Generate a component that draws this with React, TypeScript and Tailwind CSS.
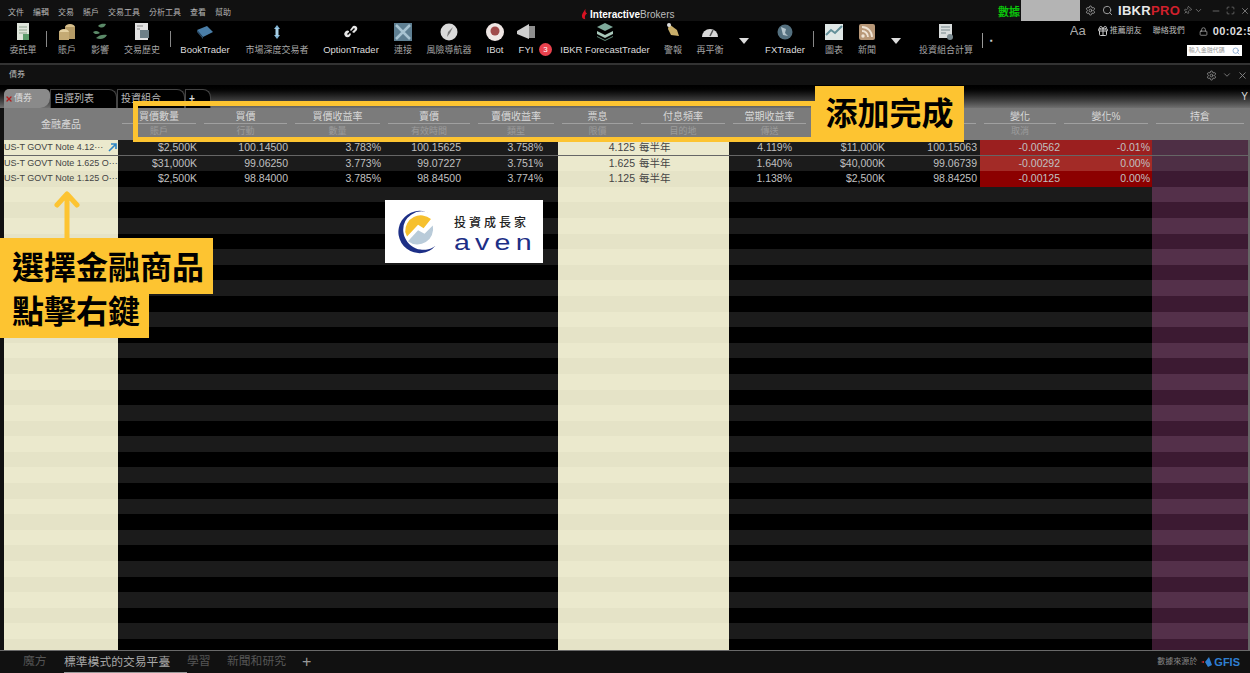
import React from 'react';
import { Gift, Lock, Pin, Search, Settings, X, Minus, Maximize, ChevronDown } from 'lucide-react';

const menus = ['文件', '編輯', '交易', '賬戶', '交易工具', '分析工具', '查看', '幫助'];

const Icon = ({ children }: { children: React.ReactNode }) => (
  <svg viewBox="0 0 20 20" className="w-[20px] h-[20px]">{children}</svg>
);

const icons: Record<string, React.ReactNode> = {
  order: <Icon><rect x="4" y="1" width="12" height="17" fill="#dfe5dc" /><path d="M6 5h8M6 8h8M6 11h8" stroke="#8fa58f" /><rect x="10" y="12" width="6" height="6" fill="#5d9b6c" /></Icon>,
  account: <Icon><ellipse cx="13" cy="5" rx="5" ry="3" fill="#d8c08c" /><rect x="8" y="5" width="10" height="12" fill="#b59b66" /><ellipse cx="7" cy="10" rx="5" ry="3" fill="#e4d0a0" /><rect x="2" y="10" width="10" height="8" fill="#c4aa74" /></Icon>,
  impact: <Icon><path d="M8 4c3-3 6-2 8-2-1 3-4 5-8 2zM3 10c3-2 5-1 7 1-3 2-6 1-7-1zM6 16c3-3 7-4 11-3-2 4-7 5-11 3z" fill="#5b8a68" /></Icon>,
  history: <Icon><rect x="3" y="1" width="13" height="17" fill="#e2e2e2" /><rect x="8" y="8" width="9" height="8" fill="#6d7f87" /><path d="M5 4h6M5 7h3" stroke="#888" /></Icon>,
  book: <Icon><path d="M2 8l10-4 6 6-10 5z" fill="#4a7ea8" /><path d="M2 8l6 7v2L2 10z" fill="#2c4e6b" /></Icon>,
  depth: <Icon><path d="M10 3l3 4H7zM10 17l-3-4h6z" fill="#7fb4d6" /><rect x="8.5" y="6" width="3" height="8" fill="#a8cfe6" /></Icon>,
  option: <Icon><path d="M12 4a3 3 0 0 1 4 4l-3 3-2-1 3-3-1-1-3 3-1-1zM8 9a3 3 0 0 0-4 1 3 3 0 0 0 0 4 3 3 0 0 0 5 0l1-2-1-1-2 2-1-1 2-2z" fill="#e6e6e6" /></Icon>,
  connect: <Icon><rect x="1" y="1" width="18" height="18" fill="#5e7f92" /><path d="M3 3l14 14M17 3L3 17" stroke="#a8c4d2" strokeWidth="2.5" /></Icon>,
  risk: <Icon><circle cx="10" cy="10" r="8.5" fill="#d9d9d9" /><path d="M14 5l-3 6-3 4 1-5z" fill="#777" /></Icon>,
  ibot: <Icon><circle cx="10" cy="10" r="9" fill="#efe6e4" /><circle cx="10" cy="9" r="4.5" fill="#a04a4a" /></Icon>,
  fyi: <Icon><path d="M1 9l12-7v15L1 12z" fill="#cfcfcf" /><rect x="13" y="4" width="6" height="12" fill="#8f8f8f" /></Icon>,
  forecast: <Icon><path d="M10 1l8 4-8 4-8-4z" fill="#7ea99a" /><path d="M2 9l8 4 8-4v3l-8 4-8-4z" fill="#a9c9bb" /><path d="M2 14l8 4 8-4v1l-8 4-8-4z" fill="#5f8a7a" /></Icon>,
  alert: <Icon><path d="M6 2l8 6 2 6-8-1-3-6z" fill="#c9ae6a" /><circle cx="6" cy="3" r="2" fill="#ddd" /></Icon>,
  rebalance: <Icon><path d="M2 15a8 8 0 0 1 16 0z" fill="#d8d8d8" /><path d="M10 14l3-6" stroke="#555" strokeWidth="1.5" /></Icon>,
  fx: <Icon><circle cx="10" cy="10" r="7.5" fill="#54707f" /><path d="M6 5l5 2-1 4 3 3-5-1z" fill="#b4c4cc" /></Icon>,
  chart: <Icon><rect x="1" y="2" width="18" height="16" fill="#dfe7e6" /><path d="M2 13l5-5 4 3 7-7" stroke="#63909a" strokeWidth="2" fill="none" /></Icon>,
  news: <Icon><rect x="2" y="2" width="16" height="16" rx="2" fill="#b89878" /><circle cx="6" cy="14" r="1.7" fill="#efe4d6" /><path d="M5 9a6 6 0 0 1 6 6M5 5a10 10 0 0 1 10 10" stroke="#efe4d6" strokeWidth="1.8" fill="none" /></Icon>,
  calc: <Icon><rect x="3" y="2" width="13" height="14" fill="#d8dcdc" /><path d="M5 5h9M5 8h9M5 11h5" stroke="#76878c" /><circle cx="14" cy="15" r="3" fill="#7a8a90" /></Icon>,
};

const tools = [
  { w: 'w-[46px]', icon: 'order', label: '委託單' },
  { sep: true },
  { w: 'w-[38px]', icon: 'account', label: '賬戶' },
  { w: 'w-[28px]', icon: 'impact', label: '影響' },
  { w: 'w-[56px]', icon: 'history', label: '交易歷史' },
  { sep: true },
  { w: 'w-[66px]', icon: 'book', label: 'BookTrader', bright: true },
  { w: 'w-[78px]', icon: 'depth', label: '市場深度交易者' },
  { w: 'w-[70px]', icon: 'option', label: 'OptionTrader', bright: true },
  { w: 'w-[34px]', icon: 'connect', label: '連接' },
  { w: 'w-[58px]', icon: 'risk', label: '風險導航器' },
  { w: 'w-[34px]', icon: 'ibot', label: 'IBot', bright: true },
  { w: 'w-[28px]', icon: 'fyi', label: 'FYI', bright: true },
  { badge: true },
  { w: 'w-[104px]', icon: 'forecast', label: 'IBKR ForecastTrader', bright: true },
  { w: 'w-[32px]', icon: 'alert', label: '警報' },
  { w: 'w-[42px]', icon: 'rebalance', label: '再平衡' },
  { caret: 'w-[26px]' },
  { w: 'w-[56px]', icon: 'fx', label: 'FXTrader', bright: true },
  { sep: true },
  { w: 'w-[38px]', icon: 'chart', label: '圖表' },
  { w: 'w-[28px]', icon: 'news', label: '新聞' },
  { caret: 'w-[30px]' },
  { w: 'w-[70px]', icon: 'calc', label: '投資組合計算' },
];

const gridCols =
  'grid grid-cols-[114px_82px_91px_93px_90px_84px_79px_92px_81px_80px_90px_80px_92px_96px]';

const headers = [
  ['買價數量', '賬戶'],
  ['買價', '行動'],
  ['買價收益率', '數量'],
  ['賣價', '有效時間'],
  ['賣價收益率', '類型'],
  ['票息', '限價'],
  ['付息頻率', '目的地'],
  ['當期收益率', '傳送'],
  ['', ''],
  ['', ''],
  ['變化', '取消'],
  ['變化%', ''],
  ['持倉', ''],
];

const cellPad = [
  'pr-[3px] text-right',
  'pr-[3px] text-right',
  'pr-[3px] text-right',
  'pr-[13px] text-right',
  'pr-[15px] text-right',
  'pr-[2px] text-right',
  'pl-[2px] text-left',
  'pr-[18px] text-right',
  'pr-[5px] text-right',
  'pr-[3px] text-right',
  'pr-0 text-right',
  'pr-[2px] text-right',
  '',
];

const data = [
  ['US-T GOVT Note 4.12···', '$2,500K', '100.14500', '3.783%', '100.15625', '3.758%', '4.125', '每半年', '4.119%', '$11,000K', '100.15063', '-0.00562', '-0.01%', ''],
  ['US-T GOVT Note 1.625 O···', '$31,000K', '99.06250', '3.773%', '99.07227', '3.751%', '1.625', '每半年', '1.640%', '$40,000K', '99.06739', '-0.00292', '0.00%', ''],
  ['US-T GOVT Note 1.125 O···', '$2,500K', '98.84000', '3.785%', '98.84500', '3.774%', '1.125', '每半年', '1.138%', '$2,500K', '98.84250', '-0.00125', '0.00%', ''],
];

const redBg = ['bg-[#9b1f1f]', 'bg-[#a32b27]', 'bg-[#8c0000]'];

function cellBg(col: number, row: number) {
  const light = row === 0 || row % 2 === 1;
  if (col === 0 || col === 6 || col === 7) return light ? 'bg-[#ebe9cd]' : 'bg-[#e5e3c7]';
  if (col === 13) {
    if (row < 2) return 'bg-[#4e2f45]';
    return light ? 'bg-[#54304a]' : 'bg-[#3c1a32]';
  }
  if ((col === 11 || col === 12) && row < 3) return redBg[row];
  return light ? 'bg-[#1b1b1b]' : 'bg-black';
}

const rows = Array.from({ length: 33 }, (_, i) => i);

export default function App() {
  return (
    <div className="relative w-[1250px] h-[673px] overflow-hidden flex flex-col bg-[#111] font-['Liberation_Sans','Noto_Sans_CJK_TC',sans-serif]">
      {/* title bar */}
      <div className="h-[21px] shrink-0 flex items-center bg-[#111]">
        <div className="flex items-center gap-[9px] pl-[8px] w-[570px] shrink-0 pt-[4px] text-[8px] text-[#b5b5b5]">
          {menus.map((m) => (
            <span key={m}>{m}</span>
          ))}
        </div>
        <div className="flex items-center w-[428px] shrink-0 pl-[11px] pt-[7px]">
          <svg viewBox="0 0 8 12" className="w-[7px] h-[12px] mr-[2px]">
            <path d="M5 0C4 3 1 5 1 8c0 3 2 4 4 4-1-2-1-5 2-7-2 0-2-2-2-5z" fill="#d81222" />
          </svg>
          <span className="text-[10px] font-bold text-white">Interactive</span>
          <span className="text-[10px] text-[#bdbdbd]">Brokers</span>
        </div>
        <span className="text-[11px] font-bold text-[#0bc40b] w-[23px] shrink-0 pt-[3px]">數據</span>
        <div className="w-[59px] h-[21px] shrink-0 bg-[#b4b4b4]" />
        <Settings className="w-[11px] h-[11px] shrink-0 ml-[5px] text-[#999]" />
        <Search className="w-[11px] h-[11px] shrink-0 ml-[6px] text-[#aaa]" />
        <span className="ml-[5px] shrink-0 text-[13px] font-bold text-[#e8e8e8] tracking-[0.3px]">IBKR</span>
        <span className="shrink-0 text-[13px] font-bold text-[#d0202c] tracking-[0.3px]">PRO</span>
        <Pin className="w-[9px] h-[9px] shrink-0 ml-[3px] text-[#888] rotate-45" />
        <ChevronDown className="w-[9px] h-[9px] shrink-0 ml-[2px] text-[#888]" />
        <Minus className="w-[10px] h-[10px] shrink-0 ml-[8px] text-[#777]" />
        <Maximize className="w-[9px] h-[9px] shrink-0 ml-[5px] text-[#777]" />
        <X className="w-[10px] h-[10px] shrink-0 ml-[5px] text-[#888]" />
      </div>

      {/* toolbar */}
      <div className="h-[42px] shrink-0 flex bg-black">
        {tools.map((t, i) => {
          if (t.sep)
            return (
              <div key={i} className="w-[2px] flex items-start pt-[10px]">
                <div className="w-px h-[16px] bg-[#888]" />
              </div>
            );
          if (t.badge)
            return (
              <div key={i} className="w-[14px] -ml-px flex items-end pb-[7px]">
                <span className="w-[13px] h-[13px] rounded-full bg-[#e9414d] text-white text-[8px] leading-[13px] text-center">3</span>
              </div>
            );
          if (t.caret)
            return (
              <div key={i} className={`${t.caret} flex justify-center pt-[17px]`}>
                <div className="w-0 h-0 border-x-[5px] border-x-transparent border-t-[6px] border-t-[#ddd]" />
              </div>
            );
          return (
            <div key={i} className={`${t.w} flex flex-col items-center pt-[1px]`}>
              <div className="h-[20px]">{icons[t.icon as string]}</div>
              <span className={`mt-[2px] whitespace-nowrap leading-[12px] ${t.bright ? 'text-[9.5px] text-[#ddd]' : 'text-[9px] text-[#a5a5a5]'}`}>
                {t.label}
              </span>
            </div>
          );
        })}
        <div className="ml-[1px] pt-[12px]">
          <div className="w-px h-[15px] bg-[#999]" />
        </div>
        <div className="ml-[7px] pt-[16px] text-[8px] leading-[8px] text-[#ccc]">▪</div>
        <div className="ml-[77px] flex-1 min-w-0 overflow-hidden flex flex-col">
          <div className="flex items-center h-[20px] whitespace-nowrap">
            <span className="text-[13px] text-[#aaa]">Aa</span>
            <Gift className="w-[12px] h-[12px] shrink-0 ml-[11px] text-[#ccc]" />
            <span className="ml-[1px] text-[8px] text-[#bbb]">推薦朋友</span>
            <span className="ml-[11px] text-[8px] text-[#bbb]">聯絡我們</span>
            <Lock className="w-[9px] h-[9px] shrink-0 ml-[14px] text-[#aaa]" />
            <span className="ml-[5px] text-[11px] font-bold text-[#ddd] tracking-[0.4px]">00:02:56</span>
          </div>
          <div className="ml-[117px] mt-[4px] w-[55px] h-[11px] bg-white flex items-center justify-between px-[2px]">
            <span className="text-[6px] text-[#999] whitespace-nowrap">輸入金融代碼</span>
            <Search className="w-[8px] h-[8px] shrink-0 text-[#6a93c4]" />
          </div>
        </div>
      </div>
      <div className="h-[2px] shrink-0 bg-[#333]" />

      {/* panel title */}
      <div className="h-[20px] shrink-0 flex items-center justify-between bg-[#111] pl-[9px] pr-[2px] rounded-t-[4px]">
        <span className="text-[8px] text-[#bbb]">債券</span>
        <div className="flex items-center gap-[5px]">
          <Settings className="w-[11px] h-[11px] text-[#888]" />
          <ChevronDown className="w-[10px] h-[10px] text-[#888]" />
          <X className="w-[11px] h-[11px] text-[#888]" />
        </div>
      </div>

      {/* tabs */}
      <div className="h-[23px] shrink-0 flex items-end pl-[4px] pr-[2px] bg-gradient-to-b from-black to-[#707070]">
        <div className="w-[46px] h-[19px] flex items-center gap-[1px] pl-[1px] bg-[#8a8a8a] rounded-t-[5px] rounded-br-[10px]">
          <X className="w-[8px] h-[8px] text-[#b01c1c]" strokeWidth={4} />
          <span className="text-[9px] text-[#ddd]">債券</span>
        </div>
        <div className="w-[67px] h-[19px] pl-[3px] bg-black border border-b-0 border-[#444] rounded-tr-[8px] text-[10px] leading-[17px] text-[#bbb]">自選列表</div>
        <div className="w-[68px] h-[19px] pl-[3px] bg-black border border-b-0 border-[#444] rounded-tr-[8px] text-[10px] leading-[17px] text-[#bbb]">投資組合</div>
        <div className="w-[26px] h-[19px] pl-[3px] bg-black border border-b-0 border-[#444] rounded-tr-[8px] text-[10px] leading-[17px] font-bold text-[#ddd]">+</div>
        <span className="ml-auto self-start pt-[4px] text-[10px] text-[#ddd]">Y</span>
      </div>

      {/* table */}
      <div className="flex-1 min-h-0 pl-[4px] bg-[#111]">
        <div className={`${gridCols} h-[32px] bg-[#7b7b7b]`}>
          <div className="flex items-center justify-center text-[10px] text-[#d8d8d8]">金融產品</div>
          {headers.map(([top, sub], i) => (
            <div key={i} className="flex flex-col items-stretch px-[4px] text-center">
              <span className="h-[16px] leading-[17px] text-[10px] text-[#d8d8d8] border-b border-[#a0a0a0]">{top}</span>
              <span className="leading-[15px] text-[9px] text-[#9c9c9c]">{sub}</span>
            </div>
          ))}
        </div>
        <div className="w-[1246px] h-[510px] overflow-hidden border-r-2 border-[#666]">
          <div className={`${gridCols} auto-rows-[15.6px]`}>
            {rows.map((r) =>
              Array.from({ length: 14 }, (_, c) => {
                const text = data[r]?.[c] ?? '';
                const pad = c === 0 ? 'pl-0 text-left' : cellPad[c - 1];
                const color = c === 0 || c === 6 || c === 7 ? 'text-[#444]' : 'text-[#c0c0c0]';
                const size = c === 0 ? 'text-[9px]' : 'text-[10.5px]';
                const line = r === 0 ? 'border-b border-[#666]' : '';
                return (
                  <div key={`${r}-${c}`} className={`relative whitespace-nowrap overflow-hidden leading-[14px] ${cellBg(c, r)} ${pad} ${color} ${size} ${line}`}>
                    {text}
                    {r === 0 && c === 0 && (
                      <svg viewBox="0 0 10 10" className="absolute right-0 top-[2px] w-[10px] h-[10px]">
                        <path d="M1 9l7-7M3 2h5v5" stroke="#2f86c5" strokeWidth="1.6" fill="none" />
                      </svg>
                    )}
                  </div>
                );
              }),
            )}
          </div>
        </div>
      </div>

      {/* bottom tabs */}
      <div className="h-[23px] shrink-0 flex items-center bg-[#111] border-t border-[#6a6a6a] text-[11.8px] text-[#555]">
        <span className="ml-[23px] w-[41px]">魔方</span>
        <span className="h-[22px] w-[123px] leading-[22px] text-[#a8a8a8] border-b border-[#999]">標準模式的交易平臺</span>
        <span className="w-[40px]">學習</span>
        <span className="w-[75px]">新聞和研究</span>
        <span className="text-[16px] text-[#999]">+</span>
        <div className="ml-auto flex items-center pr-[10px]">
          <span className="text-[8px] text-[#888]">數據來源於</span>
          <svg viewBox="0 0 14 12" className="w-[14px] h-[12px] ml-[3px]">
            <path d="M1 6l3-1v2z" fill="#d33" />
            <path d="M5 6l4-5 3 8-4 2z" fill="#2f7fd0" />
          </svg>
          <span className="text-[11px] font-bold text-[#2f7fd0]">GFIS</span>
        </div>
      </div>

      {/* annotation overlays */}
      <div className="absolute left-[133px] top-[101px] w-[683px] h-[41px] border-[5px] border-[#fdc431]" />
      <div className="absolute left-[815px] top-[86px] w-[149px] h-[56px] bg-[#fdc431] flex items-center justify-center text-[32px] font-bold text-black">
        添加完成
      </div>
      <svg viewBox="0 0 30 50" className="absolute left-[52px] top-[190px] w-[30px] h-[50px]">
        <path d="M15 48V5M5 15L15 4l10 11" stroke="#fdc431" strokeWidth="5" fill="none" strokeLinecap="round" strokeLinejoin="round" />
      </svg>
      <div className="absolute left-0 top-[238px] flex flex-col items-start text-[32px] font-bold text-black">
        <div className="h-[56px] w-[213px] pl-[12px] bg-[#fdc431] leading-[60px]">選擇金融商品</div>
        <div className="h-[44px] w-[149px] pl-[12px] bg-[#fdc431] leading-[36px]">點擊右鍵</div>
      </div>

      {/* logo */}
      <div className="absolute left-[385px] top-[200px] w-[158px] h-[63px] bg-white flex items-center">
        <svg viewBox="0 0 50 50" className="ml-[11px] w-[46px] h-[46px] shrink-0">
          <path d="M37 5A23 23 0 1 0 43 40 22 22 0 0 1 8 25 20 20 0 0 1 37 5z" fill="#1d2f86" />
          <path d="M38 11A17 17 0 0 0 10 25l2 5 12-13 6 4z" fill="#f6c02e" />
          <path d="M13 35l11-12 7 4 9-9a17 17 0 0 1-27 17z" fill="#b9cbd9" />
        </svg>
        <div className="ml-[12px] pt-[6px] flex flex-col">
          <span className="text-[12px] leading-[17px] tracking-[3px] text-[#222] font-medium whitespace-nowrap">投資成長家</span>
          <span className="text-[22px] leading-[22px] tracking-[4px] text-[#1d2f86] origin-left scale-x-[1.3] font-['Liberation_Sans']">aven</span>
        </div>
      </div>
    </div>
  );
}
